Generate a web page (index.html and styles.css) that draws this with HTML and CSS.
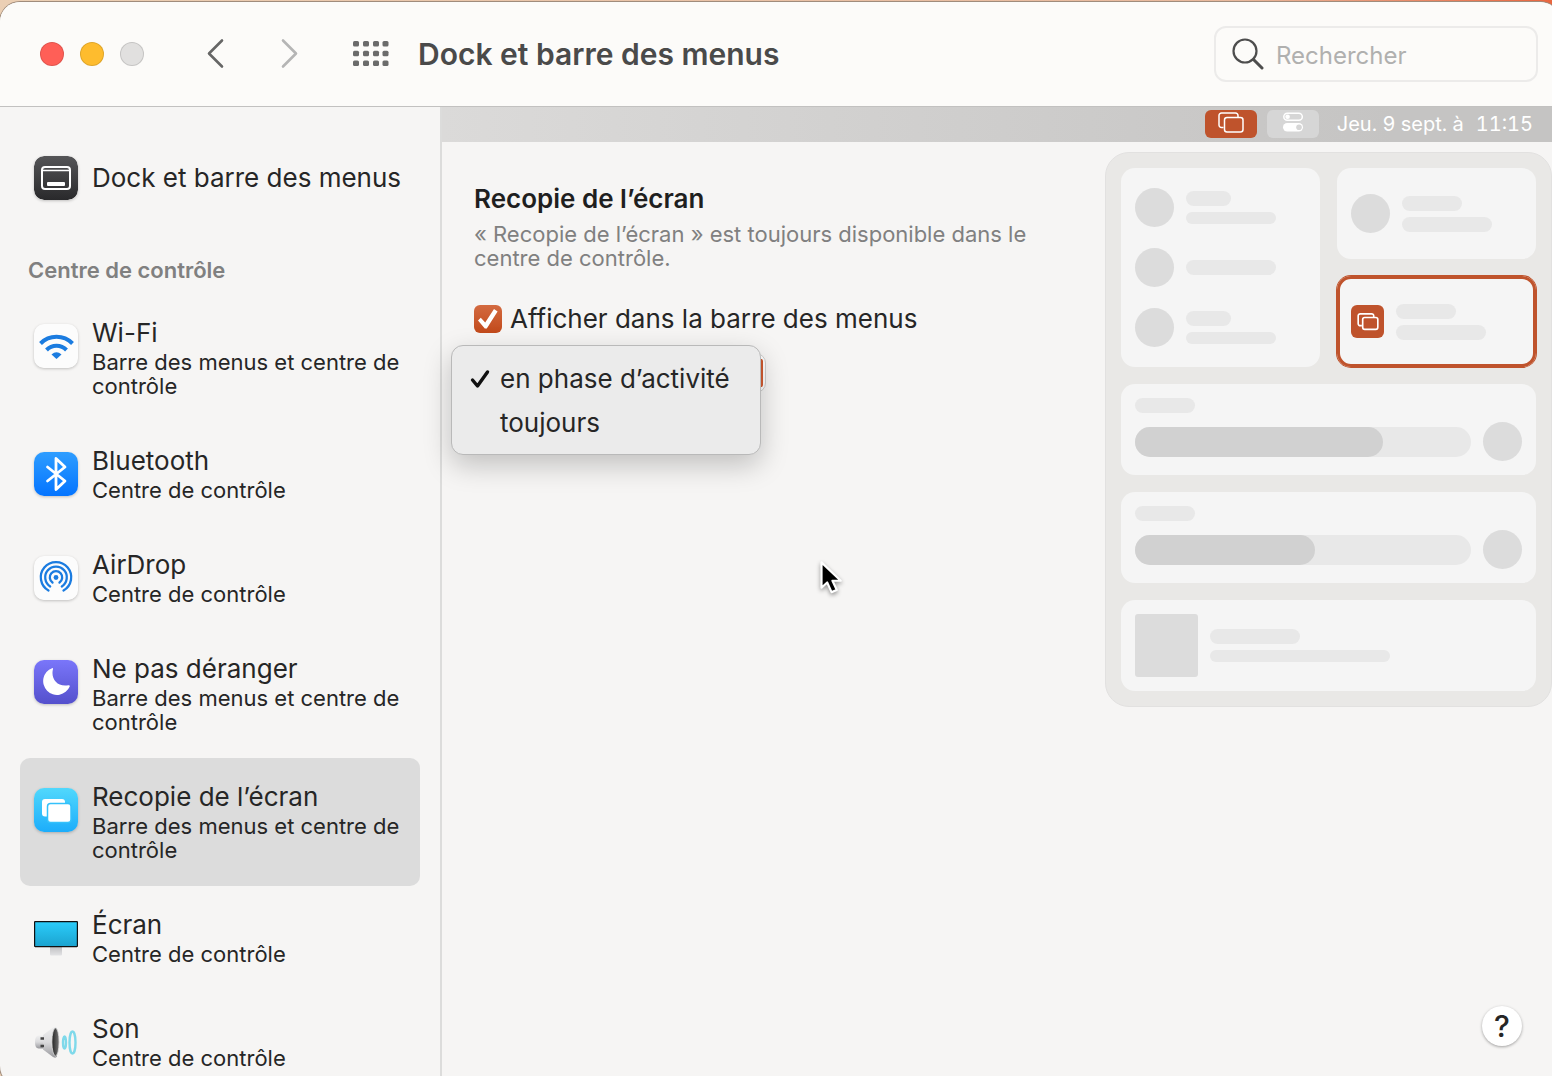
FILE: index.html
```html
<!DOCTYPE html>
<html lang="fr">
<head>
<meta charset="utf-8">
<meta name="viewport" content="width=device-width, initial-scale=1">
<title>Dock et barre des menus</title>
<link rel="stylesheet" href="styles.css">
</head>
<body>
<svg width="0" height="0" class="defs" aria-hidden="true">
  <defs>
    <symbol id="mirror" viewBox="0 0 26 22">
      <path d="M5.500 15.500H3.500A2.500 2.500 0 0 1 1 13V3.500A2.500 2.500 0 0 1 3.500 1h14A2.500 2.500 0 0 1 20 3.500V5" fill="none" stroke="currentColor"/>
      <rect x="6.500" y="5.500" width="18.500" height="14.500" rx="2.500" fill="none" stroke="currentColor"/>
    </symbol>
    <linearGradient id="gDock" x2="0" y2="1"><stop stop-color="#555557"/><stop offset="1" stop-color="#29292b"/></linearGradient>
    <linearGradient id="gScreen" x2="0" y2="1"><stop stop-color="#2bcdfb"/><stop offset="1" stop-color="#1ba3cf"/></linearGradient>
    <linearGradient id="gStand" x2="0" y2="1"><stop stop-color="#bdbdbf"/><stop offset="1" stop-color="#e3e3e5"/></linearGradient>
    <linearGradient id="gCone" x2="0" y2="1"><stop stop-color="#f0f0f0"/><stop offset=".5" stop-color="#dadadc"/><stop offset="1" stop-color="#98989c"/></linearGradient>
    <linearGradient id="gHole" x2="1" y2="0"><stop stop-color="#222"/><stop offset="1" stop-color="#777"/></linearGradient>
  </defs>
</svg>

<div class="window">
  <header class="toolbar">
    <div class="lights">
      <button class="light light-close" aria-label="Fermer"></button>
      <button class="light light-min" aria-label="Réduire"></button>
      <button class="light light-zoom" aria-label="Agrandir" disabled></button>
    </div>
    <div class="history">
      <button class="plain" aria-label="Précédent"><svg width="20" height="32" viewBox="0 0 20 32"><path d="M17 2.500 4 15.500l13 13" fill="none" stroke="#666" stroke-width="2.600" stroke-linecap="round" stroke-linejoin="round"/></svg></button>
      <button class="plain" aria-label="Suivant" disabled><svg width="20" height="32" viewBox="0 0 20 32"><path d="m3 2.500 13 13-13 13" fill="none" stroke="#b5b5b5" stroke-width="2.600" stroke-linecap="round" stroke-linejoin="round"/></svg></button>
    </div>
    <button class="plain" aria-label="Tout afficher">
      <svg width="36" height="26" viewBox="0 0 36 26" fill="#6b6b6b"><g id="dots"><rect width="6" height="5.500" rx="1.500"/><rect x="10" width="6" height="5.500" rx="1.500"/><rect x="20" width="6" height="5.500" rx="1.500"/><rect x="29.500" width="6" height="5.500" rx="1.500"/></g><use href="#dots" y="9.700"/><use href="#dots" y="19.500"/></svg>
    </button>
    <h1 class="window-title">Dock et barre des menus</h1>
    <label class="search">
      <svg width="32" height="32" viewBox="0 0 32 32" fill="none" stroke="#4d4d4d" stroke-linecap="round" aria-hidden="true"><circle cx="13" cy="13" r="11.500" stroke-width="2.200"/><path d="M21.500 21.500 30 30" stroke-width="3"/></svg>
      <input type="search" placeholder="Rechercher" aria-label="Rechercher">
    </label>
  </header>

  <div class="body">
    <nav class="sidebar">
      <a class="item item-single" href="#dock">
        <svg class="icon" viewBox="0 0 44 44"><rect width="44" height="44" rx="10" fill="url(#gDock)"/><rect x="8" y="11" width="28" height="22" rx="3" fill="none" stroke="#fff" stroke-width="2"/><path d="M8 14.500h28" stroke="#fff" stroke-width="1.500"/><rect x="13" y="26" width="18" height="4" rx="1" fill="#fff"/></svg>
        <span class="name">Dock et barre des menus</span>
      </a>
      <h2 class="section">Centre de contrôle</h2>
      <a class="item" href="#wifi">
        <svg class="icon" viewBox="0 0 44 44"><rect width="44" height="44" rx="10" fill="#fcfcfc"/><g fill="none" stroke="#1b7ce0" stroke-width="4"><path d="M6.500 19.500a22.500 22.500 0 0 1 32 0"/><path d="M12.500 26a14 14 0 0 1 20 0"/></g><path d="M17.500 30.500q5-4.500 10 0l-5 4.500z" fill="#1b7ce0"/></svg>
        <span class="text"><span class="name">Wi-Fi</span><span class="where">Barre des menus et centre de contrôle</span></span>
      </a>
      <a class="item" href="#bluetooth">
        <svg class="icon icon-blue" viewBox="0 0 44 44"><path d="m13.500 15 17.500 14-9 8.500V6.500l9 8.500-17.500 14" fill="none" stroke="#fff" stroke-width="2.800" stroke-linecap="round" stroke-linejoin="round"/></svg>
        <span class="text"><span class="name">Bluetooth</span><span class="where">Centre de contrôle</span></span>
      </a>
      <a class="item" href="#airdrop">
        <svg class="icon" viewBox="0 0 44 44"><rect width="44" height="44" rx="10" fill="#fcfcfc"/><g fill="none" stroke="#1b7ce0" stroke-width="2.300" stroke-linecap="round"><path d="M14.500 34.500a15.200 15.200 0 1 1 15 0"/><path d="M16.200 30.500a10.800 10.800 0 1 1 11.600 0"/><path d="M18.500 26.500a6.200 6.200 0 1 1 7 0"/></g><circle cx="22" cy="21.500" r="2.400" fill="#1b7ce0"/></svg>
        <span class="text"><span class="name">AirDrop</span><span class="where">Centre de contrôle</span></span>
      </a>
      <a class="item" href="#dnd">
        <svg class="icon icon-violet" viewBox="0 0 44 44"><path d="M18 8.200c.6-.3 1.200.2 1 .9C16.500 18 23 27.500 34.500 25.200c1-.2 1.500.4 1.200 1.200A13.800 13.800 0 1 1 18 8.200z" fill="#fff"/></svg>
        <span class="text"><span class="name">Ne pas déranger</span><span class="where">Barre des menus et centre de contrôle</span></span>
      </a>
      <a class="item item-selected" href="#recopie" aria-current="page">
        <svg class="icon icon-cyan" viewBox="0 0 44 44"><rect x="8" y="11" width="23" height="17.500" rx="3" fill="#fff"/><rect x="13.500" y="15.500" width="23.500" height="19" rx="3" fill="#fff" stroke="#34c1fb" stroke-width="1.500"/></svg>
        <span class="text"><span class="name">Recopie de l’écran</span><span class="where">Barre des menus et centre de contrôle</span></span>
      </a>
      <a class="item" href="#ecran">
        <svg class="icon icon-bare" viewBox="0 0 44 44"><rect x="16" y="30" width="12" height="9.500" rx="1" fill="url(#gStand)"/><rect x=".6" y="5.600" width="42.800" height="25" rx=".5" fill="url(#gScreen)" stroke="#111" stroke-width="1.200"/></svg>
        <span class="text"><span class="name">Écran</span><span class="where">Centre de contrôle</span></span>
      </a>
      <a class="item" href="#son">
        <svg class="icon icon-bare" viewBox="0 0 44 44"><path d="M9 15.500H4.500q-3.500 0-3.500 6.500t3.500 6.500H9z" fill="url(#gCone)"/><path d="M9 15 19 7.500q3-1.500 4 0v29q-1 2-4 .5L9 29.500z" fill="url(#gCone)"/><path d="M6.500 18.500H10M6.500 26H10" stroke="#444" stroke-width="2.500"/><ellipse cx="21.500" cy="22" rx="3.600" ry="14" fill="url(#gHole)" stroke="#ddd" stroke-width=".8"/><g fill="none" stroke="#7fd9ea" stroke-width="2.400"><ellipse cx="30.500" cy="22.500" rx="1.500" ry="6"/><ellipse cx="38.500" cy="22.500" rx="3" ry="11"/></g></svg>
        <span class="text"><span class="name">Son</span><span class="where">Centre de contrôle</span></span>
      </a>
    </nav>

    <main class="main">
      <div class="menubar">
        <span class="chip chip-accent"><svg class="mirror" width="26" height="22"><use href="#mirror"/></svg></span>
        <span class="chip"><svg width="22" height="20" viewBox="0 0 22 20"><rect x="1.800" y="1.200" width="18.500" height="7" rx="3.500" fill="none" stroke="#fff" stroke-width="1.500"/><circle cx="5.600" cy="4.700" r="2.300" fill="#fff"/><rect x="1" y="11" width="20" height="8.500" rx="4.200" fill="#fff"/><circle cx="17" cy="15.200" r="2.800" fill="#d6d6d6"/></svg></span>
        <span class="clock"><span>Jeu. 9 sept. à</span><time datetime="11:15">11:15</time></span>
      </div>

      <div class="content">
        <section class="settings">
          <h2 class="heading">Recopie de l’écran</h2>
          <p class="description">« Recopie de l’écran » est toujours disponible dans le centre de contrôle.</p>
          <label class="check"><input type="checkbox" checked>Afficher dans la barre des menus</label>
          <div class="popup">
            <select class="popup-button" aria-label="Afficher dans la barre des menus">
              <option selected>en phase d’activité</option>
              <option>toujours</option>
            </select>
            <div class="menu" role="listbox" aria-label="Afficher">
              <button class="option" role="option" aria-selected="true"><svg class="tick" width="20" height="20" viewBox="0 0 20 20"><path d="m2.500 11 5 6L17.500 3" fill="none" stroke="#111" stroke-width="3.400" stroke-linecap="round" stroke-linejoin="round"/></svg>en phase d’activité</button>
              <button class="option" role="option" aria-selected="false"><span class="tick"></span>toujours</button>
            </div>
          </div>
        </section>

        <div class="preview" aria-hidden="true">
          <div class="card card-tall">
            <div class="row"><i class="dot"></i><div class="bars"><i class="bar w45"></i><i class="bar thin w90"></i></div></div>
            <div class="row"><i class="dot"></i><div class="bars"><i class="bar w90"></i></div></div>
            <div class="row"><i class="dot"></i><div class="bars"><i class="bar w45"></i><i class="bar thin w90"></i></div></div>
          </div>
          <div class="card">
            <div class="row"><i class="dot"></i><div class="bars"><i class="bar w60"></i><i class="bar w90"></i></div></div>
          </div>
          <div class="card card-active">
            <div class="row"><span class="badge"><svg class="mirror mirror-bold" width="22" height="18"><use href="#mirror"/></svg></span><div class="bars"><i class="bar w60"></i><i class="bar w90"></i></div></div>
          </div>
          <div class="card card-wide card-slider">
            <i class="bar w60"></i>
            <div class="row"><div class="track"><i class="fill" style="width:73.8%"></i></div><i class="dot"></i></div>
          </div>
          <div class="card card-wide card-slider">
            <i class="bar w60"></i>
            <div class="row"><div class="track"><i class="fill" style="width:53.6%"></i></div><i class="dot"></i></div>
          </div>
          <div class="card card-wide">
            <div class="row"><i class="art"></i><div class="bars"><i class="bar w90"></i><i class="bar thin w180"></i></div></div>
          </div>
        </div>
      </div>
      <button class="help" aria-label="Aide">?</button>
      <svg class="pointer" width="28" height="40" viewBox="0 0 32 44" aria-hidden="true"><path d="M4 3v29l6.500-6 5 11 6-2.500-5-10.500H26z" fill="#000" stroke="#fff" stroke-width="2.500" stroke-linejoin="round"/></svg>
    </main>
  </div>
</div>
</body>
</html>
```
FILE: styles.css
```css
:root {
  --accent: #bf532c;
  --text: #262626;
  --paper: #f6f5f4;
}

* { box-sizing: border-box; }

body {
  margin: 0;
  height: 100vh;
  overflow: hidden;
  background: linear-gradient(90deg, #ebcfb4, #e8b89c 80%, #e9663f);
  color: var(--text);
  font-family: Inter, "Liberation Sans", sans-serif;
  font-size: 26px;
  line-height: 32px;
}

h1, h2, p { margin: 0; }
button { padding: 0; border: 0; background: none; color: inherit; font: inherit; }
svg { display: block; flex: none; }
.defs { position: absolute; }

.window {
  display: flex;
  flex-direction: column;
  height: calc(100vh + 8px);
  margin: 2px -8px 0 0;
  border-radius: 20px;
  overflow: hidden;
  background: var(--paper);
  box-shadow: 0 0 0 1px #a08c7c;
}

/* Toolbar */
.toolbar {
  display: flex;
  flex: none;
  align-items: center;
  height: 105px;
  padding: 0 22px 0 40px;
  border-bottom: 1px solid #c2c1c0;
  background: #fcfbf9;
}
.lights { display: flex; gap: 16px; margin-right: 61px; }
.light { width: 24px; height: 24px; border: 1px solid #0000001f; border-radius: 50%; }
.light-close { background: #ff5f57; }
.light-min { background: #febc2e; }
.light-zoom { background: #e1e0df; }
.history { display: flex; gap: 55px; margin-right: 53px; }
.window-title { margin: 0 auto 0 29px; color: #4a4a4a; font-size: 30px; font-weight: 600; line-height: 36px; }
.search {
  display: flex;
  align-items: center;
  gap: 12px;
  width: 324px;
  height: 56px;
  padding: 0 16px;
  border: 2px solid #ecebea;
  border-radius: 12px;
}
.search input { width: 100%; min-width: 0; padding: 4px 0 0; border: 0; outline: 0; background: none; font: inherit; font-size: 24px; }
.search input::placeholder { color: #b0b0af; opacity: 1; }

/* Sidebar */
.body { display: flex; flex: 1; min-height: 0; }
.sidebar {
  flex: none;
  width: 442px;
  padding: 19px 20px 0;
  border-right: 2px solid #dcdcdb;
  overflow: hidden;
}
.section { margin: 28px 8px 12px; color: #808080; font-size: 22px; font-weight: 600; line-height: 24px; }
.item {
  display: flex;
  gap: 14px;
  padding: 24px 14px;
  border-radius: 10px;
  color: inherit;
  text-decoration: none;
}
.item-single { align-items: center; height: 104px; }
.item-selected { background: #dcdcdc; }
.icon { width: 44px; height: 44px; margin-top: 6px; border-radius: 10px; box-shadow: 0 1px 3px #00000038; }
.item-single .icon { margin-top: 0; }
.icon-blue { background: linear-gradient(#2e9dff, #0474ff); }
.icon-violet { background: linear-gradient(#7a76fa, #5450cc); }
.icon-cyan { background: linear-gradient(#51d8fc, #1cadfb); }
.icon-bare { border-radius: 0; box-shadow: none; }
.name, .where { display: block; }
.name { line-height: 30px; }
.where { margin-top: 2px; font-size: 22px; line-height: 24px; }

/* Main pane */
.main { position: relative; flex: 1; min-width: 0; }
.menubar {
  display: flex;
  align-items: center;
  justify-content: flex-end;
  gap: 10px;
  height: 35px;
  padding: 0 27px 2px 0;
  background: linear-gradient(90deg, #dbdad9, #c5c4c3 85%);
}
.chip {
  display: flex;
  justify-content: center;
  width: 52px;
  height: 28px;
  padding-top: 2px;
  border-radius: 6px;
  background: #d6d6d6;
  color: #fff;
}
.chip-accent { background: var(--accent); }
.mirror { stroke-width: 1.5px; }
.mirror-bold { stroke-width: 2px; }
.clock { display: flex; gap: 12px; margin-left: 8px; color: #fff; font-size: 20px; font-variant-numeric: tabular-nums; }

.content { display: flex; justify-content: space-between; gap: 32px; padding: 10px 8px 0 32px; }
.settings { flex: 1; max-width: 584px; padding-top: 31px; }
.heading { color: #1f1f1f; font-size: 26px; font-weight: 600; line-height: 32px; }
.description { margin: 7px 0 33px; color: #808080; font-size: 22px; line-height: 24px; }
.check { display: flex; align-items: center; gap: 8px; }
.check input {
  display: grid;
  place-items: center;
  appearance: none;
  width: 28px;
  height: 28px;
  margin: 0;
  border-radius: 6px;
  background: linear-gradient(#d36a40, #c24a1b);
}
.check input::before {
  content: "";
  width: 20px;
  height: 20px;
  background: #fff;
  clip-path: polygon(0 58%, 14% 44%, 36% 68%, 80% 0, 98% 12%, 44% 98%, 34% 98%);
}
.popup { position: relative; width: 292px; margin-top: 18px; }
.popup-button {
  appearance: none;
  width: 100%;
  height: 40px;
  padding: 0 40px 0 12px;
  border: 1px solid #d0cfce;
  border-radius: 10px;
  background: linear-gradient(#d36a40, #c24a1b) right 3px center / 28px 28px no-repeat #fff;
  color: var(--text);
  font: inherit;
}
.menu {
  position: absolute;
  top: -8px;
  left: -23px;
  width: 310px;
  padding: 11px 0 9px;
  border: 1px solid #b9b9b9;
  border-radius: 12px;
  background: #ebebeb;
  box-shadow: 0 10px 28px #00000038;
}
.option { display: flex; align-items: center; gap: 10px; width: 100%; height: 44px; padding-left: 18px; text-align: left; }
.tick { width: 20px; height: 20px; }

/* The accent square sits against the button's right end, above its shadow. */
.popup::after {
  content: "";
  position: absolute;
  top: 6px;
  right: 3px;
  width: 2px;
  height: 28px;
  border-radius: 0 2px 2px 0;
  background: var(--accent);
}

/* Control centre preview */
.preview {
  display: grid;
  flex: none;
  grid-template-columns: 199px 199px;
  grid-template-rows: repeat(5, 91px);
  gap: 17px;
  padding: 15px;
  border: 1px solid #e2e1e0;
  border-radius: 24px;
  background: #e9e8e6;
}
.card { display: flex; flex-direction: column; justify-content: center; gap: 21px; padding: 0 14px; border-radius: 14px; background: #f5f5f5; }
.card-tall { grid-row: span 2; }
.card-wide { grid-column: span 2; }
.card-slider { gap: 9px; }
.card-active { box-shadow: inset 0 0 0 3px var(--accent), 0 0 0 1px var(--accent); }
.row { display: flex; align-items: center; gap: 12px; }
.bars { display: flex; flex-direction: column; gap: 6px; }
.bar { height: 15px; border-radius: 8px; background: #e8e8e8; }
.thin { height: 12px; }
.w45 { width: 45px; }
.w60 { width: 60px; }
.w90 { width: 90px; }
.w180 { width: 180px; }
.dot { flex: none; width: 39px; height: 39px; border-radius: 50%; background: #dcdcdc; }
.badge { display: grid; place-items: center; width: 33px; height: 33px; border-radius: 6px; background: var(--accent); color: #fff; }
.track { flex: 1; height: 30px; border-radius: 15px; background: #e8e8e8; }
.fill { display: block; height: 100%; border-radius: 15px; background: #d1d1d1; }
.art { width: 63px; height: 63px; border-radius: 3px; background: #dcdcdc; }

.help {
  position: absolute;
  right: 38px;
  bottom: 40px;
  width: 40px;
  height: 40px;
  border-radius: 50%;
  background: #fff;
  box-shadow: 0 1px 3px #00000059;
  font-size: 30px;
  font-weight: 500;
}
.pointer { position: absolute; top: 452px; left: 376px; filter: drop-shadow(0 2px 2px #0006); }
```
